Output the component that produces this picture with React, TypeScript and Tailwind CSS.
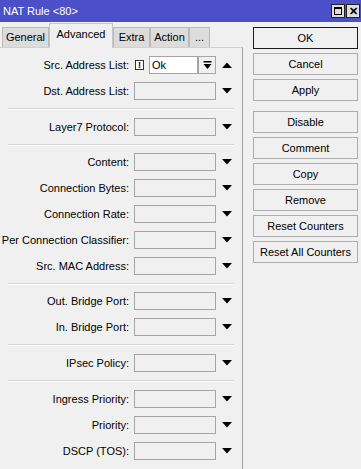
import React from "react";

const FONT = { fontFamily: '"Liberation Sans", Arial, sans-serif' };

const DownTri = () => (
  <svg width="10" height="6" viewBox="0 0 10 6">
    <polygon points="0,0 10,0 5,5.5" fill="#000" />
  </svg>
);

const UpTri = () => (
  <svg width="10" height="6" viewBox="0 0 10 6">
    <polygon points="0,6 10,6 5,0.5" fill="#000" />
  </svg>
);

// label + empty field + dropdown arrow
const Row = ({ label }: { label: string }) => (
  <div className="flex h-[26px] items-center">
    <div className="w-[129px] text-right">{label}</div>
    <div className="ml-[5px] h-[18px] w-[82px] border border-[#a5a5a5]" />
    <div className="flex w-[21px] justify-center">
      <DownTri />
    </div>
  </div>
);

const Sep = ({ h = "h-[10px]" }: { h?: string }) => (
  <div className={`flex ${h} items-center px-[8px]`}>
    <div className="w-full border-t border-[#d6d6d6] border-b border-b-white" />
  </div>
);

const SrcRow = () => (
  <div className="flex h-[26px] items-center">
    <div className="w-[129px] text-right">Src. Address List:</div>
    <div className="ml-[6px] flex h-[10px] w-[9px] items-center justify-center border border-[#333] bg-white text-[9px] font-bold leading-none">
      !
    </div>
    <div className="ml-[5px] flex h-[18px] w-[49px] items-center border border-[#a5a5a5] bg-white pl-[2px]">
      Ok
    </div>
    <div className="flex h-[18px] w-[18px] items-center justify-center border border-[#a5a5a5]">
      <svg width="9" height="9" viewBox="0 0 9 9">
        <rect x="0.5" y="0" width="8" height="1.5" fill="#000" />
        <polygon points="0.5,3 8.5,3 4.5,8" fill="#000" />
      </svg>
    </div>
    <div className="flex w-[21px] justify-center">
      <UpTri />
    </div>
  </div>
);

const Btn = ({ label, focus = false }: { label: string; focus?: boolean }) => (
  <div
    className={`flex h-[22px] w-[105px] items-center justify-center border bg-[#f0f0f0] ${
      focus ? "border-[#1a1a1a]" : "border-[#adadad]"
    }`}
  >
    {label}
  </div>
);

const Tab = ({ label, w, active = false }: { label: string; w: string; active?: boolean }) =>
  active ? (
    <div className={`${w} relative -mb-px flex h-[25px] items-center justify-center border border-b-0 border-[#c8c8c8] bg-[#f0f0f0] pb-[3px]`}>
      {label}
    </div>
  ) : (
    <div className={`${w} flex h-[20px] items-center justify-center border border-b-0 border-[#b9b9b9] bg-[#dcdcdc]`}>
      {label}
    </div>
  );

export default function App() {
  return (
    <div className="h-[469px] w-[361px] overflow-hidden bg-[#f0f0f0] text-[11px] text-black" style={FONT}>
      {/* title bar */}
      <div className="flex h-[22px] items-center bg-[#4b4fc8] pl-[3px] pr-[1px]">
        <span className="flex-1 text-white">NAT Rule &lt;80&gt;</span>
        <div className="flex h-[14px] w-[14px] items-center justify-center border border-[#222] bg-[#dedede]">
          <div className="h-[8px] w-[8px] border border-t-2 border-black" />
        </div>
        <div className="ml-[1px] flex h-[14px] w-[14px] items-center justify-center border border-[#222] bg-[#dedede] text-[11px] font-bold leading-none">
          ✕
        </div>
      </div>

      <div className="flex">
        {/* left: tabs + panel */}
        <div className="w-[243px]">
          <div className="flex h-[25px] items-end pl-[2px]">
            <Tab label="General" w="w-[47px]" />
            <Tab label="Advanced" w="w-[64px]" active />
            <Tab label="Extra" w="w-[37px]" />
            <Tab label="Action" w="w-[39px]" />
            <Tab label="..." w="w-[21px]" />
          </div>
          <div className="h-[422px] border-r border-t border-[#a0a0a0] border-t-[#d0d0d0] pt-[4px]">
            <SrcRow />
            <Row label="Dst. Address List:" />
            <Sep />
            <Row label="Layer7 Protocol:" />
            <Sep h="h-[9px]" />
            <Row label="Content:" />
            <Row label="Connection Bytes:" />
            <Row label="Connection Rate:" />
            <Row label="Per Connection Classifier:" />
            <Row label="Src. MAC Address:" />
            <Sep h="h-[9px]" />
            <Row label="Out. Bridge Port:" />
            <Row label="In. Bridge Port:" />
            <Sep />
            <Row label="IPsec Policy:" />
            <Sep />
            <Row label="Ingress Priority:" />
            <Row label="Priority:" />
            <Row label="DSCP (TOS):" />
          </div>
        </div>

        {/* right: buttons */}
        <div className="ml-[10px] flex flex-col gap-[4px] pt-[5px]">
          <Btn label="OK" focus />
          <Btn label="Cancel" />
          <Btn label="Apply" />
          <div className="h-[2px]" />
          <Btn label="Disable" />
          <Btn label="Comment" />
          <Btn label="Copy" />
          <Btn label="Remove" />
          <Btn label="Reset Counters" />
          <Btn label="Reset All Counters" />
        </div>
      </div>
    </div>
  );
}
